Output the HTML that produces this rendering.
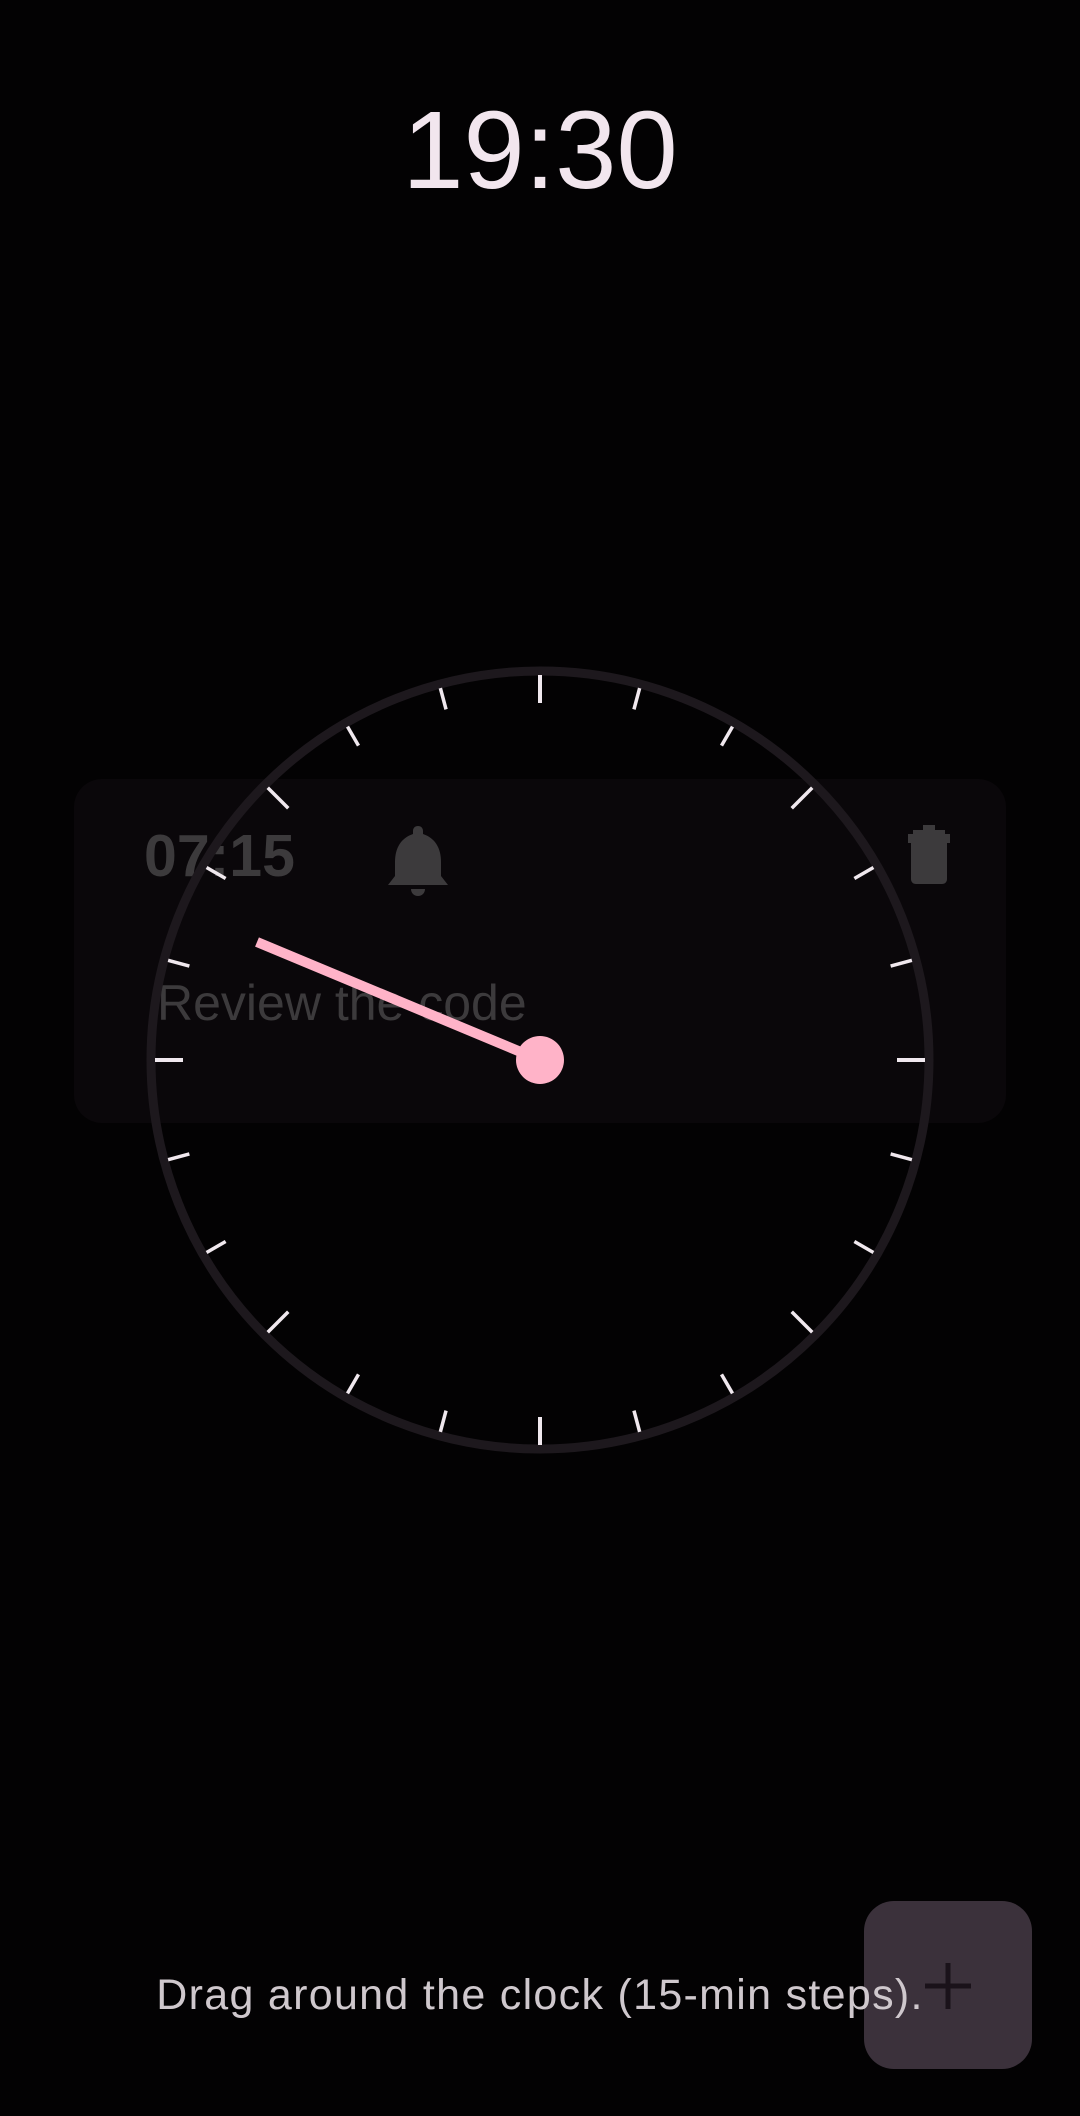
<!DOCTYPE html>
<html><head><meta charset="utf-8"><style>
html,body{margin:0;padding:0;background:#030203;width:1080px;height:2116px;overflow:hidden;font-family:"Liberation Sans",sans-serif;}
.abs{position:absolute;}
</style></head><body>
<div class="abs" style="left:0;top:86px;width:1080px;text-align:center;font-size:110px;color:#f2e6ee;line-height:130px;">19:30</div>

<div class="abs" style="left:74px;top:779px;width:932px;height:344px;border-radius:28px;background:#0a070a;"></div>
<div class="abs" style="left:144px;top:820px;font-size:59px;font-weight:bold;color:#3c3a3c;line-height:72px;">07:15</div>
<div class="abs" style="left:157px;top:973px;font-size:50px;color:#3c3a3c;line-height:60px;">Review the code</div>

<svg class="abs" style="left:0;top:0" width="1080" height="2116">
 <path d="M418 826 c-3 0 -5 2 -5 5 v3 c-12 4 -18 14 -18 28 v14 l-7 9 h60 l-7 -9 v-14 c0 -14 -6 -24 -18 -28 v-3 c0 -3 -2 -5 -5 -5z M411 889 h14 c0 4 -3 7 -7 7 s-7 -3 -7 -7z" fill="#3c3a3c"/>
 <path d="M913 830 h32 v4 h-32z M923 825 h12 v5 h-12z M908 834 h42 v9 h-42z M911 843 h36 v36 c0 3 -2 5 -5 5 h-26 c-3 0 -5 -2 -5 -5z" fill="#3c3a3c"/>
 <circle cx="540" cy="1060" r="389" fill="none" stroke="#1d181d" stroke-width="9"/>
 <g stroke="#f0e8ee" id="ticks"></g>
 <line x1="540" y1="1060" x2="257" y2="942" stroke="#ffb3c8" stroke-width="10"/>
 <circle cx="540" cy="1060" r="24" fill="#ffb3c8"/>
 <rect x="864" y="1901" width="168" height="168" rx="30" fill="#3b313b"/>
 <path d="M948 1963 v46 M925 1986 h46" stroke="#1a121a" stroke-width="5"/>
</svg>
<div class="abs" style="left:0;top:1967px;width:1080px;text-align:center;font-size:43px;color:#cfc8cd;letter-spacing:1.3px;line-height:56px;">Drag around the clock (15-min steps).</div>
<script>
var g=document.getElementById('ticks'),s='';
for(var i=0;i<24;i++){var a=i*15*Math.PI/180;var major=i%6==0;var r1=385,r2=major?357:363;
if(i%3==0&&!major){r2=356;}
var x1=540+r1*Math.sin(a),y1=1060-r1*Math.cos(a),x2=540+r2*Math.sin(a),y2=1060-r2*Math.cos(a);
s+='<line x1="'+x1+'" y1="'+y1+'" x2="'+x2+'" y2="'+y2+'" stroke-width="'+(major?4:3.5)+'"/>';}
g.innerHTML=s;
</script>
</body></html>
